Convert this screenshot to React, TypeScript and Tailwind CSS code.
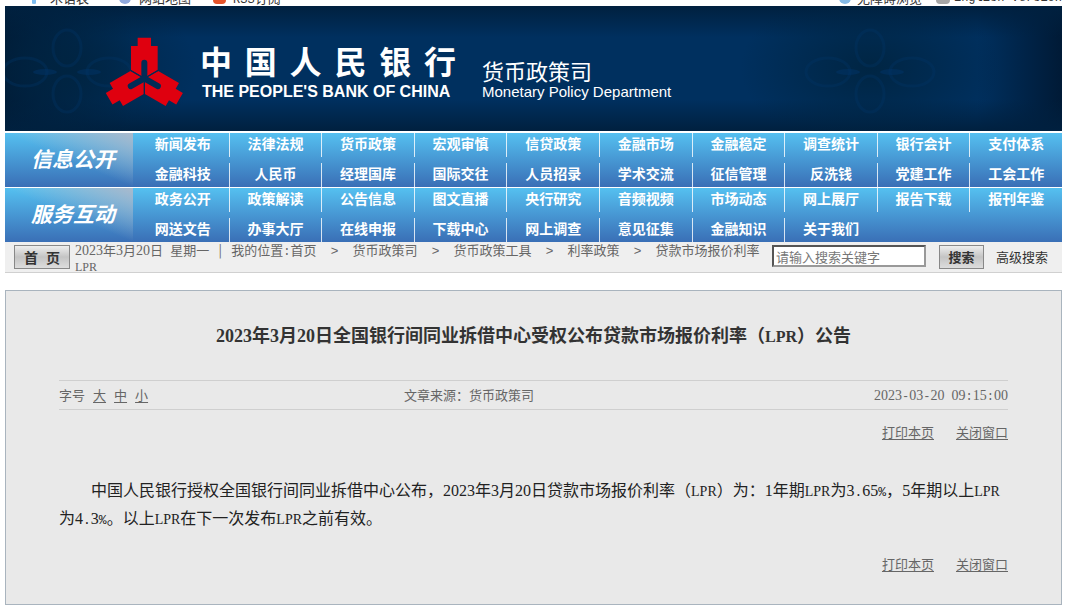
import { Fragment } from 'react';

const infoLinks = [
  '新闻发布', '法律法规', '货币政策', '宏观审慎', '信贷政策', '金融市场', '金融稳定', '调查统计', '银行会计', '支付体系',
  '金融科技', '人民币', '经理国库', '国际交往', '人员招录', '学术交流', '征信管理', '反洗钱', '党建工作', '工会工作',
];

const serviceLinks = [
  '政务公开', '政策解读', '公告信息', '图文直播', '央行研究', '音频视频', '市场动态', '网上展厅', '报告下载', '报刊年鉴',
  '网送文告', '办事大厅', '在线申报', '下载中心', '网上调查', '意见征集', '金融知识', '关于我们', '', '',
];

const crumbs = ['首页', '货币政策司', '货币政策工具', '利率政策'];

// Digits, letters and marks each get a face and size that is half as wide as a Chinese character
const halfWidth = {
  sm: {
    digit: "font-['Liberation_Serif'] text-[14px] leading-none",
    letter: "font-['Liberation_Serif'] text-[12px] leading-none",
    mark: "font-['Liberation_Mono'] text-[12px] leading-none",
  },
  md: {
    digit: "font-['Liberation_Serif'] text-[16px] leading-none",
    letter: "font-['Liberation_Serif'] text-[14px] leading-none",
    mark: "font-['Liberation_Mono'] text-[13px] leading-none",
  },
  lg: {
    digit: "font-['Liberation_Serif'] text-[18px] leading-none",
    letter: "font-['Liberation_Serif'] text-[16px] leading-none",
    mark: "font-['Liberation_Mono'] text-[15px] leading-none",
  },
};

function Mixed({ text, size = 'sm' }: { text: string; size?: keyof typeof halfWidth }) {
  const faces = halfWidth[size];
  return (
    <>
      {text.split(/(\d+|[A-Za-z]+|[.%:| -]+)/).map((part, i) => {
        if (i % 2 === 0) return <Fragment key={i}>{part}</Fragment>;
        const face = /\d/.test(part) ? faces.digit : /[A-Za-z]/.test(part) ? faces.letter : faces.mark;
        return (
          <span key={i} className={face}>
            {part}
          </span>
        );
      })}
    </>
  );
}

function Logo() {
  return (
    <svg viewBox="15 20 237 210" className="relative h-[70px] w-[79px] shrink-0" aria-hidden="true">
      <g transform="translate(133 144)">
        {[0, 120, 240].map((angle) => (
          <path
            key={angle}
            transform={`rotate(${angle})`}
            d="M-20-122H20V-97H40V-25L0-2L-40-25V-97H-20Z"
            fill="#df000f"
          />
        ))}
        {[0, 120, 240].map((angle) => (
          <g key={angle} transform={`rotate(${angle})`} stroke="#002c56" fill="none">
            <path d="M0 0V-47" strokeWidth="18" strokeLinecap="round" />
            <path d="M0 0V50" strokeWidth="3" />
          </g>
        ))}
      </g>
    </svg>
  );
}

function Watermark({ className }: { className: string }) {
  return (
    <svg viewBox="0 0 260 125" className={className} aria-hidden="true">
      <defs>
        <radialGradient id="shade">
          <stop offset="0" stopColor="#002440" stopOpacity="0.9" />
          <stop offset="1" stopColor="#002440" stopOpacity="0" />
        </radialGradient>
      </defs>
      <ellipse cx="130" cy="62" rx="130" ry="80" fill="url(#shade)" />
      <g fill="none" stroke="#003566" strokeWidth="3" opacity="0.35">
        <ellipse cx="130" cy="42" rx="14" ry="18" />
        <ellipse cx="130" cy="88" rx="14" ry="18" />
        <ellipse cx="88" cy="66" rx="22" ry="14" />
        <ellipse cx="172" cy="66" rx="22" ry="14" />
      </g>
      <g fill="#003468" opacity="0.5">
        <ellipse cx="108" cy="66" rx="12" ry="3" />
        <ellipse cx="152" cy="66" rx="12" ry="3" />
      </g>
    </svg>
  );
}

function TopBar() {
  return (
    <div className="flex h-[6px] items-end justify-between overflow-hidden pl-[23px] text-[13px] leading-4 text-[#333]">
      <div className="flex gap-[22px]">
        <a href="#" className="flex items-center gap-[10px]">
          <span className="h-3 w-3 rounded-full bg-[linear-gradient(90deg,transparent_35%,#7dbcf0_35%,#7dbcf0_65%,transparent_65%)]" />
          术语表
        </a>
        <a href="#" className="ml-2 flex items-center gap-[8px]">
          <span className="h-3 w-3 rounded-full bg-[#8fa8dc]" />
          网站地图
        </a>
        <a href="#" className="flex items-center gap-[7px]">
          <span className="h-3 w-[13px] rounded-sm bg-[#e4532a]" />
          <span>
            <span className="font-['Liberation_Mono'] text-[12px] leading-none">RSS</span>订阅
          </span>
        </a>
      </div>
      <div className="flex gap-[14px]">
        <a href="#" className="flex items-center gap-[6px]">
          <span className="h-3 w-3 rounded-full bg-[#84b9e6]" />
          无障碍浏览
        </a>
        <a href="#" className="flex items-center gap-1">
          <span className="h-3 w-[14px] rounded-sm bg-[#a6a6a6]" />
          <span className="font-['Liberation_Mono'] text-[12px]">English Version</span>
        </a>
      </div>
    </div>
  );
}

function Banner() {
  return (
    <header className="relative flex h-[125px] items-start overflow-hidden bg-[#00305f] bg-[linear-gradient(to_bottom,#00203f_0%,#00203f00_25%,#00203f00_75%,#00203f_100%),linear-gradient(to_right,#001a36_0%,#001a3600_12%,#001a3600_92%,#001a36_100%)] pl-[100px] pt-[31px] text-white">
      <Watermark className="absolute left-[-68px] top-0 h-[125px] w-[260px]" />
      <Watermark className="absolute right-[62px] top-0 h-[125px] w-[260px]" />
      <Logo />
      <div className="relative ml-4 w-[256px]">
        <h1 className="flex justify-between text-[32px] font-bold leading-[46px]">
          {'中国人民银行'.split('').map((c) => (
            <span key={c}>{c}</span>
          ))}
        </h1>
        <p className="whitespace-nowrap pl-0.5 font-['Liberation_Sans'] text-[16px] font-bold leading-[18px]">
          THE PEOPLE'S BANK OF CHINA
        </p>
      </div>
      <div className="relative ml-[26px] mt-[17px]">
        <h2 className="text-[22px] leading-8">货币政策司</h2>
        <p className="font-['Liberation_Sans'] text-[15px] leading-3">Monetary Policy Department</p>
      </div>
    </header>
  );
}

function NavSection({ title, links }: { title: string; links: string[] }) {
  return (
    <nav className="flex bg-linear-to-b from-[#55c0f0] to-[#3a6fb6] text-white">
      <h2 className="flex w-[128px] shrink-0 items-center justify-center bg-[linear-gradient(to_bottom_left,#aab9cc_0%,#aab9cc00_50%)] pb-0.5 pl-2 text-[21px] font-bold italic">
        {title}
      </h2>
      <ul className="grid flex-1 grid-cols-10 gap-y-1.5 pl-[3px] text-[14px] font-bold">
        {links.map((link, i) => (
          <li
            key={i}
            className="flex h-6 items-center justify-center border-l border-white/80 pb-[3px] nth-[10n+1]:border-transparent empty:border-transparent"
          >
            {link && <a href="#">{link}</a>}
          </li>
        ))}
      </ul>
    </nav>
  );
}

function LocationBar() {
  return (
    <div className="flex h-[31px] border-b border-[#d0d0d0] bg-[#efefef] text-[13px] text-[#666]">
      <button className="ml-[9px] mt-[3px] flex h-6 w-14 shrink-0 items-center justify-center gap-2 border border-[#888] bg-linear-to-b from-[#eee] via-[#c4c4c4] to-[#ddd] text-[14px] font-bold text-[#333]">
        <span>首</span>
        <span>页</span>
      </button>
      <p className="ml-[5px] min-w-0 flex-1 leading-4">
        <Mixed text="2023年3月20日 星期一" />
        <span className="inline-block w-[22px] text-center">|</span>
        <Mixed text="我的位置:" />
        {crumbs.map((crumb) => (
          <Fragment key={crumb}>
            <a href="#">{crumb}</a>
            <span className="inline-block w-9 text-center font-['Liberation_Sans'] leading-none">&gt;</span>
          </Fragment>
        ))}
        贷款市场报价利率 <Mixed text="LPR" />
      </p>
      <form className="ml-1 flex items-start pt-[3px]" onSubmit={(e) => e.preventDefault()}>
        <input
          type="text"
          aria-label="搜索关键字"
          placeholder="请输入搜索关键字"
          className="h-[22px] w-[154px] border-2 border-t-[#555] border-r-[#999] border-b-[#999] border-l-[#555] bg-white pl-0.5 leading-4 placeholder:text-[#777]"
        />
        <button className="ml-[13px] h-6 w-[45px] border border-[#888] bg-linear-to-b from-[#eee] via-[#c4c4c4] to-[#ddd] text-[13px] font-bold leading-5 text-[#333]">
          搜索
        </button>
        <a href="#" className="ml-3 mr-[14px] leading-6 text-[#333]">
          高级搜索
        </a>
      </form>
    </div>
  );
}

function PageActions() {
  return (
    <div className="flex justify-end gap-[22px] text-[13px] leading-4 text-[#666]">
      <button className="underline underline-offset-2">打印本页</button>
      <button className="underline underline-offset-2">关闭窗口</button>
    </div>
  );
}

function Article() {
  return (
    <main className="mt-[17px] border border-[#a9b4be] bg-[#e9e9e9] px-[53px] pb-8">
      <h2 className="pt-[31px] text-center text-[18px] font-bold leading-6 text-[#333]">
        <Mixed size="lg" text="2023年3月20日全国银行间同业拆借中心受权公布贷款市场报价利率（LPR）公告" />
      </h2>
      <div className="mt-[34px] grid grid-cols-[4fr_4fr_3fr] border-y border-[#cfcfcf] text-[13px] leading-7 text-[#666]">
        <div className="flex gap-2">
          <span>字号</span>
          <button className="underline underline-offset-2">大</button>
          <button className="underline underline-offset-2">中</button>
          <button className="underline underline-offset-2">小</button>
        </div>
        <span>文章来源：货币政策司</span>
        <time className="text-right">
          <Mixed text="2023-03-20 09:15:00" />
        </time>
      </div>
      <div className="mt-[14px]">
        <PageActions />
      </div>
      <p className="mb-[25px] mt-[35px] indent-[32px] text-[16px] leading-7 text-[#222]">
        <Mixed
          size="md"
          text="中国人民银行授权全国银行间同业拆借中心公布，2023年3月20日贷款市场报价利率（LPR）为：1年期LPR为3.65%，5年期以上LPR为4.3%。以上LPR在下一次发布LPR之前有效。"
        />
      </p>
      <PageActions />
    </main>
  );
}

export default function App() {
  return (
    <div className="min-h-screen bg-white pl-[5px] pr-[18px] font-['Noto_Sans_CJK_SC',sans-serif]">
      <TopBar />
      <Banner />
      <div className="flex flex-col gap-px pt-0.5">
        <NavSection title="信息公开" links={infoLinks} />
        <NavSection title="服务互动" links={serviceLinks} />
      </div>
      <LocationBar />
      <Article />
    </div>
  );
}
